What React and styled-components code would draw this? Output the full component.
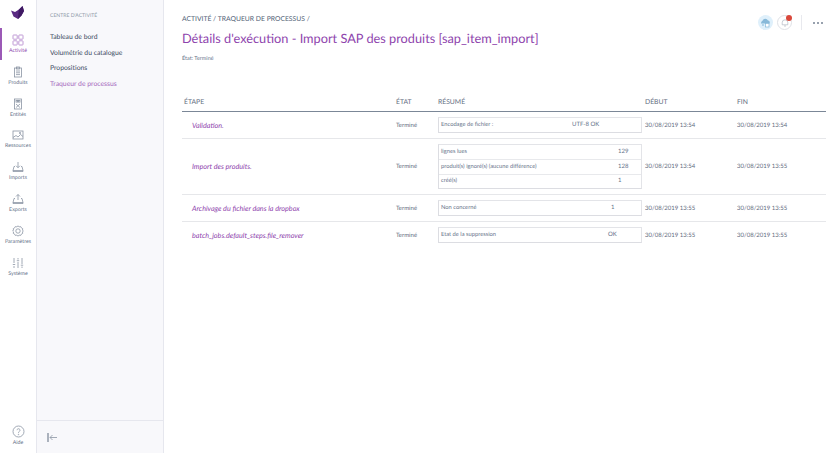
import React from "react";
import styled, { createGlobalStyle } from "styled-components";

const Global = createGlobalStyle`
  html, body { margin: 0; padding: 0; background: #fff; }
  body { font-family: Lato, "Open Sans", sans-serif; color: #4a5a70; text-rendering: geometricPrecision; }
`;

const Page = styled.div`display: flex; width: 840px; height: 453px; overflow: hidden;`;
const Rail = styled.nav`
  width: 36px; flex: none; display: flex; flex-direction: column; align-items: stretch;
  border-right: 1px solid #e6e7ee; background: #fff;
`;
const Logo = styled.div`height: 28px; display: flex; justify-content: center; padding-top: 5px; box-sizing: border-box;`;
const RailList = styled.div`display: flex; flex-direction: column; flex: 1;`;
const RailItem = styled.div`
  height: 31.8px; display: flex; flex-direction: column; align-items: center; justify-content: flex-start;
  padding-top: 6px; padding-right: 2px; box-sizing: border-box; gap: 2px;
  font-size: 5.3px; line-height: 7px; white-space: nowrap;
  color: ${p => (p.$active ? "#8e44ad" : "#66728a")};
  border-left: 2px solid ${p => (p.$active ? "#9b59b6" : "transparent")};
  svg { display: block; }
`;
const Help = styled(RailItem)`height: 34px;`;

const SubNav = styled.aside`
  width: 126px; flex: none; background: #f8f8fb; border-right: 1px solid #e6e7ee;
  display: flex; flex-direction: column;
`;
const SubBody = styled.div`flex: 1; padding: 13px 0 0 13px;`;
const SubTitle = styled.div`font-size: 5.1px; line-height: 7px; color: #8f98a8; margin-bottom: 12px;`;
const SubLink = styled.div`
  font-size: 6.8px; line-height: 10px; height: 15.5px; white-space: nowrap;
  color: ${p => (p.$active ? "#a569bd" : "#3d4c63")};
`;
const SubFoot = styled.div`
  height: 32px; border-top: 1px solid #e6e7ee; display: flex; align-items: center; padding-left: 10px;
`;

const Main = styled.main`flex: 1; min-width: 0; padding: 14px 14px 0 18px; position: relative;`;
const Crumb = styled.div`font-size: 6.8px; line-height: 10px; color: #4f5e75; text-transform: uppercase;`;
const Title = styled.h1`
  margin: 5px 0 0; font-weight: 400; font-size: 12.75px; line-height: 18px; color: #8e44ad; white-space: nowrap;
`;
const Status = styled.div`margin-top: 8px; font-size: 5.5px; line-height: 8px; color: #66728a;`;
const Actions = styled.div`
  position: absolute; top: 15px; right: 17px; display: flex; align-items: center;
`;
const Avatar = styled.div`
  width: 15px; height: 15px; border-radius: 50%; background: #dff0fb; display: flex; align-items: center; justify-content: center;
`;
const Bell = styled.div`
  width: 15px; height: 15px; border-radius: 50%; border: 1px solid #dfe1e6; margin-left: 4px; position: relative;
  display: flex; align-items: center; justify-content: center; box-sizing: border-box;
`;
const Badge = styled.span`
  position: absolute; top: -1px; right: -1px; width: 6px; height: 6px; border-radius: 50%; background: #d9483b;
`;
const Divider = styled.div`width: 1px; height: 15px; background: #e8e9ee; margin: 0 11px 0 9px;`;
const Dots = styled.div`display: flex; gap: 2px;`;
const Dot = styled.span`width: 2px; height: 2px; background: #98a1ae; display: block;`;

const Table = styled.table`
  width: 644px; margin-top: 29px; border-collapse: collapse; table-layout: fixed;
`;
const Th = styled.th`
  font-size: 6.8px; font-weight: 400; text-align: left; text-transform: uppercase; color: #5f6c80;
  height: 19px; padding: 0 0 0 2px; border-bottom: 1px solid #7b8797; vertical-align: middle;
`;
const Tr = styled.tr`border-bottom: 1px solid #e6e7ea; &:last-child { border-bottom: none; }`;
const Td = styled.td`
  font-size: 6px; color: #5f6c80; padding: 0 0 0 2px; vertical-align: middle; white-space: nowrap;
`;
const StepCell = styled(Td)`
  font-size: 7.2px; font-style: italic; color: #8e44ad; padding-left: 10px;
`;
const SummaryCell = styled.td`padding: 5px 0 5px 2px; vertical-align: middle;`;
const Summary = styled.div`
  width: 204px; border: 1px solid #e3e4e8; box-sizing: border-box; border-bottom-color: #dcdde2; border-left-color: #dcdde2;
`;
const SummaryRow = styled.div`
  display: grid; grid-template-columns: ${p => p.$value}px 1fr; height: 14px; align-items: center;
  font-size: 5.75px; line-height: 8px; color: #66728a; padding-left: 2px; white-space: nowrap;
  & + & { border-top: 1px solid #e8e9ec; box-sizing: border-box; height: 14.5px; }
`;
const Value = styled.span`font-size: 6px;`;

const I = { fill: "none", stroke: "#8a94a3", strokeWidth: 0.8 };

const LogoMark = () => (
  <svg width="16" height="15" viewBox="0 0 16 15">
    <path d="M1 5.5 L5 7 L9 4.5 L12.5 1 L14 6 L11.5 10.5 L8 14 L3.5 11.5Z" fill="#5a2a82" />
    <path d="M9 4.5 L12.5 1 L14 6 L11.5 10.5 L8 14 L8.5 8Z" fill="#3f1a63" />
  </svg>
);
const Grid = () => (
  <svg width="12" height="12" viewBox="0 0 12 12" fill="none" stroke="#b98fd0" strokeWidth="0.9">
    <rect x="1" y="1" width="4.2" height="4.2" rx="0.6" /><rect x="6.8" y="1" width="4.2" height="4.2" rx="0.6" />
    <rect x="1" y="6.8" width="4.2" height="4.2" rx="0.6" /><rect x="6.8" y="6.8" width="4.2" height="4.2" rx="0.6" />
  </svg>
);
const Clip = () => (
  <svg width="12" height="12" viewBox="0 0 12 12" {...I}>
    <rect x="2.5" y="2" width="7" height="9" /><rect x="4.5" y="1" width="3" height="2" />
    <path d="M4 5h4M4 6.8h4M4 8.6h4" />
  </svg>
);
const Entity = () => (
  <svg width="12" height="12" viewBox="0 0 12 12" {...I}>
    <rect x="2.5" y="1" width="7" height="10" /><rect x="4" y="2.5" width="1.6" height="1.6" /><rect x="6.4" y="2.5" width="1.6" height="1.6" />
    <path d="M4 6l4 3.5M8 6l-4 3.5" />
  </svg>
);
const Picture = () => (
  <svg width="12" height="12" viewBox="0 0 12 12" {...I}>
    <rect x="1" y="2" width="10" height="8" /><path d="M1 8.5l3-2 2 1.5 2.5-2.5 2.5 2" /><circle cx="8" cy="4" r="0.7" />
  </svg>
);
const Imp = () => (
  <svg width="12" height="12" viewBox="0 0 12 12" {...I}>
    <path d="M6 1v5.5M4 4.7L6 6.7l2-2" /><path d="M3 5.5H2L1 9.5h10l-1-4H9" /><path d="M1 9.5v1h10v-1" />
  </svg>
);
const Exp = () => (
  <svg width="12" height="12" viewBox="0 0 12 12" {...I}>
    <path d="M6 7V1.5M4 3.5L6 1.5l2 2" /><path d="M3 5.5H2L1 9.5h10l-1-4H9" /><path d="M1 9.5v1h10v-1" />
  </svg>
);
const Gear = () => (
  <svg width="12" height="12" viewBox="0 0 12 12" {...I}>
    <circle cx="6" cy="6" r="2.2" />
    <path d="M6 .9l1.2.9 1.5-.2.7 1.3 1.3.7-.2 1.5.9.9-.9.9.2 1.5-1.3.7-.7 1.3-1.5-.2L6 11.1l-1.2-.9-1.5.2-.7-1.3-1.3-.7.2-1.5L.6 6l.9-.9-.2-1.5 1.3-.7.7-1.3 1.5.2z" />
  </svg>
);
const Sliders = () => (
  <svg width="12" height="12" viewBox="0 0 12 12" {...I}>
    <path d="M2 1v5M2 9v2M6 1v1.5M6 5v6M10 1v6M10 9.5V11" /><path d="M.8 7.5h2.4M4.8 3.7h2.4M8.8 8.2h2.4" />
  </svg>
);
const Question = () => (
  <svg width="13" height="13" viewBox="0 0 13 13" {...I}>
    <circle cx="6.5" cy="6.5" r="5.5" /><path d="M5 5.2a1.5 1.5 0 1 1 2.3 1.3c-.6.4-.8.7-.8 1.3" /><circle cx="6.5" cy="9.5" r="0.3" />
  </svg>
);
const Collapse = () => (
  <svg width="11" height="11" viewBox="0 0 11 11" fill="none" stroke="#8a94a3" strokeWidth="0.8">
    <path d="M1 1v9" strokeWidth="1.4" /><path d="M10 5.5H3M5.5 3L3 5.5 5.5 8" />
  </svg>
);
const CloudAvatar = () => (
  <svg width="11" height="11" viewBox="0 0 11 11">
    <path d="M1 6.5a3 3 0 0 1 1.5-2.8A3 3 0 0 1 8 3.5a2 2 0 0 1 1.5 3z" fill="#88b9d9" />
    <rect x="5.5" y="6.5" width="3.5" height="3.5" fill="#fff" stroke="#88b9d9" strokeWidth="0.7" />
    <path d="M3 7v2" stroke="#88b9d9" />
  </svg>
);
const BellIcon = () => (
  <svg width="8" height="8" viewBox="0 0 8 8" fill="none" stroke="#a3abb7" strokeWidth="0.6">
    <path d="M1.2 5.8V3.6a2.8 2.8 0 0 1 5.6 0v2.2zM3 7h2" />
  </svg>
);

const nav = [
  ["Activité", <Grid />, true], ["Produits", <Clip />], ["Entités", <Entity />], ["Ressources", <Picture />],
  ["Imports", <Imp />], ["Exports", <Exp />], ["Paramètres", <Gear />], ["Système", <Sliders />],
];
const links = ["Tableau de bord", "Volumétrie du catalogue", "Propositions"];

const rows = [
  { step: "Validation.", sum: [["Encodage de fichier :", "UTF-8 OK"]], val: 132, start: "30/08/2019 13:54", end: "30/08/2019 13:54" },
  { step: "Import des produits.", sum: [["lignes lues", "129"], ["produit(s) ignoré(s) (aucune différence)", "128"], ["créé(s)", "1"]], val: 178, start: "30/08/2019 13:54", end: "30/08/2019 13:55" },
  { step: "Archivage du fichier dans la dropbox", sum: [["Non concerné", "1"]], val: 171, start: "30/08/2019 13:55", end: "30/08/2019 13:55" },
  { step: "batch_jobs.default_steps.file_remover", sum: [["Etat de la suppression", "OK"]], val: 168, start: "30/08/2019 13:55", end: "30/08/2019 13:55" },
];

export default function App() {
  return (
    <Page>
      <Global />
      <Rail>
        <Logo><LogoMark /></Logo>
        <RailList>
          {nav.map(([label, icon, active]) => (
            <RailItem key={label} $active={active}>{icon}<span>{label}</span></RailItem>
          ))}
        </RailList>
        <Help><Question /><span>Aide</span></Help>
      </Rail>
      <SubNav>
        <SubBody>
          <SubTitle>CENTRE D'ACTIVITÉ</SubTitle>
          {links.map(l => <SubLink key={l}>{l}</SubLink>)}
          <SubLink $active>Traqueur de processus</SubLink>
        </SubBody>
        <SubFoot><Collapse /></SubFoot>
      </SubNav>
      <Main>
        <Crumb>Activité / Traqueur de processus /</Crumb>
        <Title>Détails d'exécution - Import SAP des produits [sap_item_import]</Title>
        <Status>État: Terminé</Status>
        <Actions>
          <Avatar><CloudAvatar /></Avatar>
          <Bell><BellIcon /><Badge /></Bell>
          <Divider />
          <Dots><Dot /><Dot /><Dot /></Dots>
        </Actions>
        <Table>
          <colgroup>
            <col style={{ width: 212 }} /><col style={{ width: 42 }} /><col style={{ width: 207 }} /><col style={{ width: 92 }} /><col style={{ width: 91 }} />
          </colgroup>
          <thead>
            <tr><Th>Étape</Th><Th>État</Th><Th>Résumé</Th><Th>Début</Th><Th>Fin</Th></tr>
          </thead>
          <tbody>
            {rows.map(r => (
              <Tr key={r.step}>
                <StepCell>{r.step}</StepCell>
                <Td>Terminé</Td>
                <SummaryCell>
                  <Summary>
                    {r.sum.map(([k, v]) => (
                      <SummaryRow key={k} $value={r.val - 1}><span>{k}</span><Value>{v}</Value></SummaryRow>
                    ))}
                  </Summary>
                </SummaryCell>
                <Td>{r.start}</Td>
                <Td>{r.end}</Td>
              </Tr>
            ))}
          </tbody>
        </Table>
      </Main>
    </Page>
  );
}
